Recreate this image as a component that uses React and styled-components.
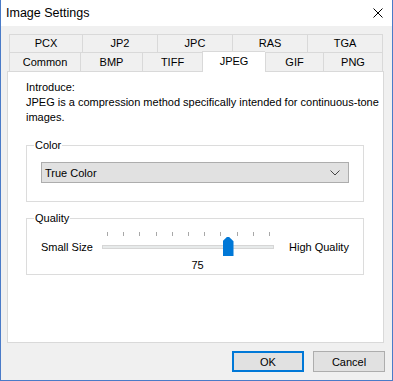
import React from 'react';
import styled, { createGlobalStyle } from 'styled-components';

const GlobalStyle = createGlobalStyle`
  html, body {
    margin: 0;
    padding: 0;
    background: #f0f0f0;
  }
  * {
    box-sizing: border-box;
  }
`;

// Window frame
const Window = styled.div`
  width: 393px;
  height: 381px;
  display: flex;
  flex-direction: column;
  border: 1px solid #4a7bc8;
  border-top: none;
  background: #f0f0f0;
  font-family: "Liberation Sans", Arial, sans-serif;
  font-size: 11px;
  color: #000;
  overflow: hidden;
`;

const TitleBar = styled.div`
  height: 26px;
  flex: none;
  display: flex;
  align-items: center;
  justify-content: space-between;
  padding: 0 9px 1px 5px;
  background: #fff;
  font-size: 12.5px;
`;

const CloseIcon = styled.svg`
  width: 10px;
  height: 10px;
  display: block;
`;

const Body = styled.div`
  flex: 1;
  display: flex;
  flex-direction: column;
  padding: 8px 8px 8px 6px;
`;

// Tabs
const TabStrip = styled.div`
  margin: 0 1px 0 2px;
  width: 374px;
`;

const TabRow = styled.div`
  display: grid;
  grid-template-columns: ${p => p.$cols};
  height: ${p => p.$height}px;
`;

const Tab = styled.div`
  display: flex;
  align-items: center;
  justify-content: center;
  border-top: 1px solid #d9d9d9;
  border-left: 1px solid #d9d9d9;
  border-right: ${p => (p.$last ? '1px solid #d9d9d9' : 'none')};
  background: ${p => (p.$active ? '#fff' : '#f0f0f0')};
  position: relative;
  z-index: ${p => (p.$active ? 2 : 0)};
  margin-top: ${p => (p.$active ? '-1px' : '0')};
  height: ${p => (p.$active ? 'calc(100% + 2px)' : '100%')};
  padding-bottom: ${p => (p.$active ? '3px' : '1px')};
  white-space: nowrap;
`;

// Panel
const Panel = styled.div`
  height: 272px;
  background: #fff;
  border: 1px solid #d9d9d9;
  padding: 8px 19px 0 18px;
`;

const Intro = styled.p`
  margin: 0;
  line-height: 15px;
  white-space: nowrap;
`;

const Group = styled.fieldset`
  margin: ${p => p.$top}px 0 0 0;
  padding: 0 14px ${p => p.$bottom}px 14px;
  border: 1px solid #dcdcdc;
  min-width: 0;
`;

const Legend = styled.legend`
  margin-left: -7px;
  padding: 0 1px;
  line-height: 13px;
`;

const Select = styled.div`
  margin-top: 10px;
  height: 21px;
  display: flex;
  align-items: center;
  justify-content: space-between;
  padding: 0 8px 0 3px;
  background: #e1e1e1;
  border: 1px solid #adadad;
`;

const Chevron = styled.svg`
  width: 10px;
  height: 6px;
  display: block;
`;

const SliderRow = styled.div`
  margin-top: 7px;
  display: flex;
  align-items: flex-start;
  height: 25px;
`;

const SideLabel = styled.span`
  flex: none;
  width: ${p => (p.$w ? `${p.$w}px` : 'auto')};
  margin-left: ${p => p.$ml || 0}px;
  padding-top: 9px;
  line-height: 13px;
  white-space: nowrap;
`;

const Slider = styled.div`
  flex: none;
  position: relative;
  width: 172px;
  height: 25px;
`;

const Tick = styled.span`
  position: absolute;
  top: 0;
  width: 1px;
  height: 4px;
  background: #a8a8a8;
`;

const Track = styled.div`
  position: absolute;
  left: 0;
  right: 0;
  top: 13px;
  height: 4px;
  background: #e7eaea;
  border: 1px solid #d6d6d6;
`;

const Thumb = styled.div`
  position: absolute;
  top: 5px;
  width: 11px;
  height: 19px;
  background: #0078d7;
  clip-path: polygon(40% 0, 60% 0, 100% 22%, 100% 100%, 0 100%, 0 22%);
`;

const Value = styled.div`
  margin-top: 2px;
  padding-left: 5px;
  text-align: center;
  line-height: 13px;
`;

// Buttons
const ButtonRow = styled.div`
  margin: 8px -1px 0 0;
  display: flex;
  justify-content: flex-end;
  gap: 9px;
`;

const Button = styled.button`
  width: 72px;
  height: 21px;
  padding: 0;
  background: #e1e1e1;
  border: ${p => (p.$primary ? '2px solid #0078d7' : '1px solid #adadad')};
  font-family: "Liberation Sans", Arial, sans-serif;
  font-size: 11px;
  color: #000;
`;

const topTabs = ['PCX', 'JP2', 'JPC', 'RAS', 'TGA'];
const bottomTabs = ['Common', 'BMP', 'TIFF', 'JPEG', 'GIF', 'PNG'];
const quality = 75;
const tickCount = 11;
const tickInset = 5;
const tickSpan = 162;

export default function App() {
  const thumbLeft = tickInset + (tickSpan * quality) / 100 - 6;

  return (
    <>
      <GlobalStyle />
      <Window>
        <TitleBar>
          <span>Image Settings</span>
          <CloseIcon viewBox="0 0 10 10">
            <path d="M0.5 0.5 L9.5 9.5 M9.5 0.5 L0.5 9.5" stroke="#000" strokeWidth="1" />
          </CloseIcon>
        </TitleBar>
        <Body>
          <TabStrip>
            <TabRow $cols="73px 75px 75px 75px 76px" $height={18}>
              {topTabs.map((t, i) => (
                <Tab key={t} $last={i === topTabs.length - 1}>{t}</Tab>
              ))}
            </TabRow>
            <TabRow $cols="71px 62px 60px 63px 58px 60px" $height={19}>
              {bottomTabs.map((t, i) => (
                <Tab key={t} $active={t === 'JPEG'} $last={i === bottomTabs.length - 1}>{t}</Tab>
              ))}
            </TabRow>
          </TabStrip>
          <Panel>
            <Intro>
              Introduce:
              <br />
              JPEG is a compression method specifically intended for continuous-tone
              <br />
              images.
            </Intro>
            <Group $top={14} $bottom={18}>
              <Legend>Color</Legend>
              <Select>
                <span>True Color</span>
                <Chevron viewBox="0 0 10 6">
                  <path d="M0.5 0.5 L5 5 L9.5 0.5" fill="none" stroke="#444" strokeWidth="1" />
                </Chevron>
              </Select>
            </Group>
            <Group $top={10} $bottom={2}>
              <Legend>Quality</Legend>
              <SliderRow>
                <SideLabel $w={61}>Small Size</SideLabel>
                <Slider>
                  {Array.from({ length: tickCount }, (_, i) => (
                    <Tick key={i} style={{ left: tickInset + (tickSpan / (tickCount - 1)) * i }} />
                  ))}
                  <Track />
                  <Thumb style={{ left: thumbLeft }} />
                </Slider>
                <SideLabel $ml={15}>High Quality</SideLabel>
              </SliderRow>
              <Value>{quality}</Value>
            </Group>
          </Panel>
          <ButtonRow>
            <Button $primary>OK</Button>
            <Button>Cancel</Button>
          </ButtonRow>
        </Body>
      </Window>
    </>
  );
}
